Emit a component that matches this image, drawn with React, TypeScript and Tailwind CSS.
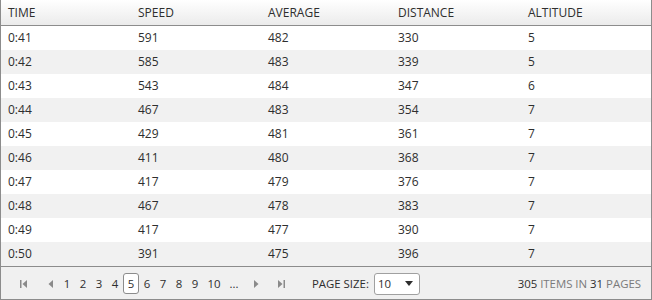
import React from 'react';

const rows = [
  ['0:41', 591, 482, 330, 5],
  ['0:42', 585, 483, 339, 5],
  ['0:43', 543, 484, 347, 6],
  ['0:44', 467, 483, 354, 7],
  ['0:45', 429, 481, 361, 7],
  ['0:46', 411, 480, 368, 7],
  ['0:47', 417, 479, 376, 7],
  ['0:48', 467, 478, 383, 7],
  ['0:49', 417, 477, 390, 7],
  ['0:50', 391, 475, 396, 7],
];

const columns = ['TIME', 'SPEED', 'AVERAGE', 'DISTANCE', 'ALTITUDE'];

function Arrow({ dir, bar }: { dir: 'left' | 'right'; bar?: boolean }) {
  return (
    <svg width="10" height="10" viewBox="0 0 10 10" className="text-[#8a8a8a]">
      {dir === 'left' ? (
        <>
          {bar && <rect x="1" y="1" width="1.5" height="8" fill="currentColor" />}
          <path d="M8 1 L3.5 5 L8 9 Z" fill="currentColor" />
        </>
      ) : (
        <>
          <path d="M2 1 L6.5 5 L2 9 Z" fill="currentColor" />
          {bar && <rect x="7.5" y="1" width="1.5" height="8" fill="currentColor" />}
        </>
      )}
    </svg>
  );
}

export default function App() {
  return (
    <div
      className="w-[652px] h-[300px] bg-white border-x border-b border-[#8c8c8c] text-[12px] text-[#2e2e2e] overflow-hidden"
      style={{ fontFamily: '"Open Sans", sans-serif' }}
    >
      <div className="grid grid-cols-5 h-[26px] border-b border-[#8c8c8c] bg-gradient-to-b from-white to-[#ebebeb]">
        {columns.map((c) => (
          <div key={c} className="pl-[7px] flex items-center">
            {c}
          </div>
        ))}
      </div>

      {rows.map((r, i) => (
        <div
          key={i}
          className={`grid grid-cols-5 h-[24px] ${i % 2 === 1 ? 'bg-[#f1f1f1]' : 'bg-white'}`}
        >
          {r.map((v, j) => (
            <div key={j} className="pl-[7px] flex items-center">
              {v}
            </div>
          ))}
        </div>
      ))}

      <div className="h-[34px] border-t border-[#8c8c8c] bg-[#f0f0f0] flex items-center pl-[15px] pr-[10px] text-[11.4px]">
        <div className="flex items-center">
          <span className="w-[16px] flex justify-center"><Arrow dir="left" bar /></span>
          <span className="w-[10px]" />
          <span className="w-[16px] flex justify-center"><Arrow dir="left" /></span>
          <div className="flex items-center ml-[1px]">
            {['1', '2', '3', '4'].map((n) => (
              <span key={n} className="w-[16px] text-center">{n}</span>
            ))}
            <span className="w-[16px] h-[21px] flex items-center justify-center border border-[#8c8c8c] rounded-[3px] bg-white">
              5
            </span>
            {['6', '7', '8', '9'].map((n) => (
              <span key={n} className="w-[16px] text-center">{n}</span>
            ))}
            <span className="w-[22px] text-center">10</span>
            <span className="w-[18px] text-center">...</span>
          </div>
          <span className="w-[6px]" />
          <span className="w-[16px] flex justify-center"><Arrow dir="right" /></span>
          <span className="w-[8px]" />
          <span className="w-[16px] flex justify-center"><Arrow dir="right" bar /></span>
        </div>

        <span className="ml-[23px]">PAGE SIZE:</span>
        <div className="ml-[5px] w-[46px] h-[22px] border border-[#a0a0a0] rounded-[3px] bg-white flex items-center justify-between pl-[3px] pr-[6px]">
          <span>10</span>
          <svg width="8" height="5" viewBox="0 0 8 5">
            <path d="M0 0 L8 0 L4 5 Z" fill="#2e2e2e" />
          </svg>
        </div>

        <div className="ml-auto">
          <span>305</span>
          <span className="text-[#7a7a7a]"> ITEMS IN </span>
          <span>31</span>
          <span className="text-[#7a7a7a]"> PAGES</span>
        </div>
      </div>
    </div>
  );
}
